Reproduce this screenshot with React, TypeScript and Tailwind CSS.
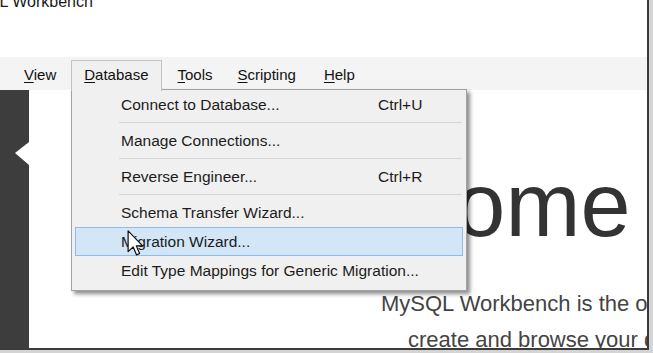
import React from "react";

type MenuRow =
  | { kind: "item"; label: string; shortcut?: string; active?: boolean }
  | { kind: "sep" };

const menuRows: MenuRow[] = [
  { kind: "item", label: "Connect to Database...", shortcut: "Ctrl+U" },
  { kind: "sep" },
  { kind: "item", label: "Manage Connections..." },
  { kind: "sep" },
  { kind: "item", label: "Reverse Engineer...", shortcut: "Ctrl+R" },
  { kind: "sep" },
  { kind: "item", label: "Schema Transfer Wizard..." },
  { kind: "item", label: "Migration Wizard...", active: true },
  { kind: "item", label: "Edit Type Mappings for Generic Migration..." },
];

function Underlined({ first, rest }: { first: string; rest: string }) {
  return (
    <span>
      <span className="underline underline-offset-2 decoration-1">{first}</span>
      {rest}
    </span>
  );
}

function Cursor() {
  return (
    <svg
      className="absolute left-[127px] top-[230px] z-30"
      width="17"
      height="26"
      viewBox="0 0 12 19"
    >
      <path
        d="M0.6 0.6 L0.6 15.8 L4.3 12.4 L6.8 18.2 L9 17.2 L6.6 11.6 L11.2 11.6 Z"
        fill="#ffffff"
        stroke="#111111"
        strokeWidth="0.9"
        strokeLinejoin="round"
      />
    </svg>
  );
}

function DatabaseMenu() {
  return (
    <div className="absolute left-[71px] top-[89px] z-10 w-[396px] bg-[#f0f0f0] border border-[#a3a3a3] shadow-[3px_3px_4px_rgba(0,0,0,0.45)] pb-[5px] text-[15.5px] text-[#1c1c1c]">
      {menuRows.map((row, i) =>
        row.kind === "sep" ? (
          <div key={i} className="h-[7px] flex items-center ml-[47px] mr-[4px]">
            <div className="h-px w-full bg-[#d6d6d6]" />
          </div>
        ) : row.active ? (
          <div
            key={i}
            className="mx-[3px] h-[29px] flex items-center pl-[45px] bg-[#d3e6f7] border border-[#8fbde9]"
          >
            <span className="w-[257px]">{row.label}</span>
            {row.shortcut && <span>{row.shortcut}</span>}
          </div>
        ) : (
          <div key={i} className="h-[29px] flex items-center pl-[49px]">
            <span className="w-[257px] whitespace-nowrap">{row.label}</span>
            {row.shortcut && <span>{row.shortcut}</span>}
          </div>
        )
      )}
    </div>
  );
}

export default function App() {
  return (
    <div
      className="relative w-[653px] h-[353px] overflow-hidden bg-[#d4d4d4]"
      style={{ fontFamily: '"Liberation Sans", Arial, sans-serif' }}
    >
      <div className="relative w-[649px] h-[350px] bg-white border-r-2 border-b-2 border-[#3b3b3b] flex flex-col overflow-hidden">
        {/* title */}
        <div className="h-[57px] shrink-0">
          <div className="mt-[-6.5px] ml-[-45px] text-[16px] leading-none text-[#1a1a1a] whitespace-nowrap">
            MySQL Workbench
          </div>
        </div>

        {/* menu bar */}
        <div className="h-[33px] shrink-0 bg-[#f4f4f4] flex items-end pl-[11px] gap-[2px] text-[15px] text-[#111]">
          <div className="h-[30px] flex items-center px-[13px]">
            <Underlined first="V" rest="iew" />
          </div>
          <div className="relative z-20 h-[31px] mb-[-1px] pb-px flex items-center pl-[12px] pr-[13px] bg-[#f0f0f0] border border-b-0 border-[#c2c2c2]">
            <Underlined first="D" rest="atabase" />
          </div>
          <div className="h-[30px] flex items-center pl-[13px] pr-[10px]">
            <Underlined first="T" rest="ools" />
          </div>
          <div className="h-[30px] flex items-center px-[13px]">
            <Underlined first="S" rest="cripting" />
          </div>
          <div className="h-[30px] flex items-center px-[13px]">
            <Underlined first="H" rest="elp" />
          </div>
        </div>

        {/* body */}
        <div className="flex-1 flex min-h-0">
          <div className="relative w-[29px] shrink-0 bg-[#3d3d3d]">
            <svg className="absolute left-[15px] top-[52px]" width="14" height="23" viewBox="0 0 14 23">
              <path d="M14 0 L0 11 L14 23 Z" fill="#ffffff" />
            </svg>
          </div>
          <div className="flex-1 min-w-0 overflow-hidden text-[#333333]">
            <div className="mt-[70px] pl-[228px] text-[90px] leading-none whitespace-nowrap">
              Welcome to MySQL Workbench
            </div>
            <div className="mt-[36px] text-[22px] leading-[36px] text-[#444444] whitespace-nowrap">
              <div className="pl-[352px]">
                MySQL Workbench is the official graphical user interface (GUI) tool for MySQL.
              </div>
              <div className="pl-[379px]">
                create and browse your database schemas, work with database objects
              </div>
            </div>
          </div>
        </div>

        <DatabaseMenu />
        <Cursor />
      </div>
    </div>
  );
}
